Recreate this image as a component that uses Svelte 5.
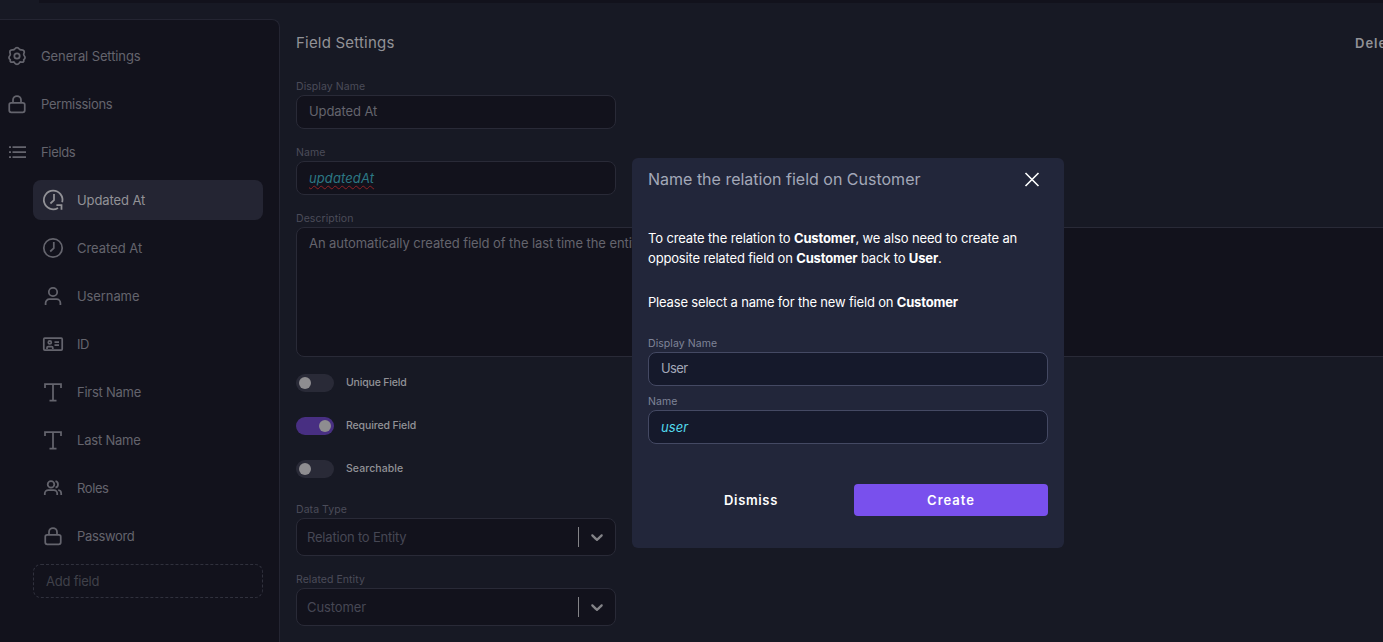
<script>
  const sections = [
    { icon: 'gear', label: 'General Settings', ls: -0.11 },
    { icon: 'lock', label: 'Permissions', ls: -0.3 },
    { icon: 'list', label: 'Fields', ls: -0.33 }
  ];
  const fields = [
    { icon: 'updated', label: 'Updated At', ls: -0.1, active: true },
    { icon: 'clock', label: 'Created At', ls: -0.03 },
    { icon: 'user', label: 'Username', ls: -0.1 },
    { icon: 'id', label: 'ID', ls: -0.4 },
    { icon: 'text', label: 'First Name', ls: -0.25 },
    { icon: 'text', label: 'Last Name', ls: -0.2 },
    { icon: 'users', label: 'Roles', ls: -0.4 },
    { icon: 'lock', label: 'Password', ls: -0.35 }
  ];
  const toggles = [
    { label: 'Unique Field', on: false, ls: -0.17 },
    { label: 'Required Field', on: true, ls: -0.12 },
    { label: 'Searchable', on: false, ls: 0.08 }
  ];
  const selects = [
    { label: 'Data Type', value: 'Relation to Entity', ls: -0.2 },
    { label: 'Related Entity', value: 'Customer', ls: -0.08 }
  ];
</script>

{#snippet icon(name)}
  <svg class="icon" viewBox="0 0 24 24" width="24" height="24" fill="none" stroke="currentColor" stroke-width="1.75">
    {#if name === 'gear'}
      <circle cx="12" cy="12" r="2.7" />
      <path d="M9.7 5.1Q10.6 3.7 12 3.7T14.3 5.1Q15 6.1 16.5 5.9Q18.3 5.7 19 7T18.8 9.7Q18.3 10.9 19.4 12Q20.4 13 19.9 14.3L19.4 15Q18.4 15.4 18.8 16.3Q19.1 17.6 18 18.1Q17 18.3 16 18Q14.9 17.9 14.3 18.9Q13.3 20.3 12 20.3T9.7 18.9Q9.1 17.9 8 18Q7 18.3 6 18.1Q4.9 17.6 5.2 16.3Q5.6 15.4 4.6 15L4.1 14.3Q3.6 13 4.6 12Q5.7 10.9 5.2 9.7T5 7Q5.7 5.7 7.5 5.9Q9 6.1 9.7 5.1Z" />
    {:else if name === 'lock'}
      <rect x="4.25" y="10.75" width="15.5" height="9.5" rx="2" />
      <path d="M8 10.5V8a4 4 0 0 1 8 0v2.5" />
    {:else if name === 'list'}
      <path d="M7.5 7H21M7.5 12H21M7.5 17H21M4 7h2M4 12h2M4 17h2" />
    {:else if name === 'updated'}
      <path d="M21.2 14.2A9.3 9.3 0 1 0 17 19.9M13 6v6.2l-3.6 3.3M15.4 17h5.1v4.8" />
    {:else if name === 'clock'}
      <circle cx="12" cy="12" r="9.2" />
      <path d="M12.8 6v6.2l-3.6 3.3" />
    {:else if name === 'user'}
      <circle cx="12" cy="8" r="4.2" />
      <path d="M4.6 21v-2a3.8 3.8 0 0 1 3.8-3.8h7.2a3.8 3.8 0 0 1 3.8 3.8v2" />
    {:else if name === 'id'}
      <rect x="2.8" y="6.2" width="18.4" height="11.8" rx="1" />
      <circle cx="8.8" cy="10.4" r="1.5" />
      <path d="M6 17v-1.2q0-1.2 1.2-1.2h3.4q1.2 0 1.2 1.2V17M13.5 10.2H18M13.5 13H18" />
    {:else if name === 'text'}
      <path d="M4 8V4.2h16V8M12 4.2v16.6M8.5 20.6h7" />
    {:else if name === 'users'}
      <circle cx="10" cy="8.4" r="3.3" />
      <path d="M3.8 19v-1.6a3.4 3.4 0 0 1 3.4-3.4h5.6a3.4 3.4 0 0 1 3.4 3.4V19M14.5 5.2a3.3 3.3 0 0 1 0 6.4M17.2 14a3.4 3.4 0 0 1 3 3.4V19" />
    {/if}
  </svg>
{/snippet}

<div class="page">
  <div class="topstrip"></div>
  <div class="body">
    <aside>
      {#each sections as s}
        <div class="section">{@render icon(s.icon)}<span style="letter-spacing:{s.ls}px">{s.label}</span></div>
      {/each}
      <div class="fields">
        {#each fields as f}
          <div class="field" class:active={f.active}>{@render icon(f.icon)}<span style="letter-spacing:{f.ls}px">{f.label}</span></div>
        {/each}
        <div class="add">Add field</div>
      </div>
    </aside>

    <main>
      <header><h1>Field Settings</h1><button class="delete">Delete</button></header>
      <div class="group">
        <div class="label">Display Name</div>
        <div class="input">Updated At</div>
      </div>
      <div class="group">
        <div class="label">Name</div>
        <div class="input code"><span class="misspelt">updatedAt</span></div>
      </div>
      <div class="group">
        <div class="label">Description</div>
        <div class="input area">An automatically created field of the last time the entity was updated</div>
      </div>
      <div class="toggles">
        {#each toggles as t}
          <div class="toggle"><i class:on={t.on}></i><span style="letter-spacing:{t.ls}px">{t.label}</span></div>
        {/each}
      </div>
      {#each selects as s}
        <div class="group">
          <div class="label">{s.label}</div>
          <div class="input select">
            <span style="letter-spacing:{s.ls}px">{s.value}</span>
            <b></b>
            <svg width="20" height="20" viewBox="0 0 20 20"><path d="M4.516 7.548c0.436-0.446 1.043-0.481 1.576 0l3.908 3.747 3.908-3.747c0.533-0.481 1.141-0.446 1.574 0 0.436 0.445 0.408 1.197 0 1.615-0.406 0.418-4.695 4.502-4.695 4.502-0.217 0.223-0.502 0.335-0.787 0.335s-0.57-0.112-0.789-0.335c0 0-4.287-4.084-4.695-4.502s-0.436-1.17 0-1.615z" fill="#848488" /></svg>
          </div>
        </div>
      {/each}
    </main>
  </div>

  <div class="modal" role="dialog" aria-label="Name the relation field">
    <div class="mhead">
      <h2>Name the relation field on Customer</h2>
      <svg width="16" height="16" viewBox="0 0 16 16" stroke="#fff" stroke-width="1.6"><path d="M1.5 2l13 13M14.5 2l-13 13" /></svg>
    </div>
    <p class="p1"><span class="l1">To create the relation to <strong>Customer</strong>, we also need to create an</span><br /><span class="l2">opposite related field on <strong>Customer</strong> back to <strong>User</strong>.</span></p>
    <p class="l3">Please select a name for the new field on <strong>Customer</strong></p>
    <div class="mgroup">
      <div class="label">Display Name</div>
      <div class="input name">User</div>
    </div>
    <div class="mgroup">
      <div class="label">Name</div>
      <div class="input code">user</div>
    </div>
    <div class="actions">
      <button class="dismiss">Dismiss</button>
      <button class="primary">Create</button>
    </div>
  </div>
</div>

<style>
  :global(body) { background: #171924; overflow: hidden; }
  .page {
    position: relative;
    width: 1383px;
    height: 642px;
    overflow: hidden;
    background: #171924;
    font-family: Inter, sans-serif;
    font-size: 13px;
    display: flex;
    flex-direction: column;
    white-space: nowrap;
  }
  .page :global(*) { box-sizing: border-box; }
  .topstrip { height: 3px; flex: none; margin-left: 39px; background: #12121c; }
  .body { flex: 1; display: flex; padding-top: 16px; }
  aside {
    width: 280px;
    flex: none;
    height: 640px;
    background: #12121c;
    border-top: 1px solid #242532;
    border-right: 1px solid #242532;
    border-top-right-radius: 8px;
    padding: 16px 16px 0 5px;
  }
  .icon { flex: none; display: block; }
  .section, .field { display: flex; align-items: center; height: 40px; margin-bottom: 8px; color: #64646d; }
  .section span, .field span { padding-bottom: 1px; }
  .section { gap: 12px; }
  .fields { padding-left: 28px; }
  .field { gap: 12px; padding-left: 8px; border-radius: 8px; }
  .field.active { background: #242533; color: #929297; }
  .add {
    height: 34px;
    border: 1px dashed #30313d;
    border-radius: 8px;
    display: flex;
    align-items: center;
    padding-left: 12px;
    letter-spacing: -0.22px;
    color: #40414a;
  }
  main { flex: 1; min-width: 0; padding-left: 16px; }
  header { height: 58px; display: flex; align-items: center; justify-content: space-between; padding-bottom: 11px; }
  h1 { margin: 0; font-size: 15px; font-weight: 400; letter-spacing: 0.2px; color: #929297; }
  .delete { width: 28px; overflow: visible; text-align: left; }
  button {
    border: 0;
    background: none;
    padding: 0;
    font: 600 13px Inter, sans-serif;
    letter-spacing: 1px;
    color: #fff;
    white-space: nowrap;
  }
  button.delete { color: #929297; }
  .group { margin-bottom: 14px; }
  .label { height: 18px; line-height: 18px; padding-top: 1px; font-size: 10.5px; letter-spacing: 0.06px; color: #4b4c59; }
  .input {
    width: 320px;
    height: 34px;
    border: 1px solid #292a37;
    border-radius: 8px;
    background: #12121c;
    padding-left: 12px;
    line-height: 31px;
    letter-spacing: -0.09px;
    color: #64646d;
  }
  .code { font-style: italic; line-height: 32px; letter-spacing: 0.1px; color: #2c7884; }
  .misspelt { text-decoration: underline wavy #8e2124 1px; text-underline-offset: 2px; text-decoration-skip-ink: none; }
  .area { width: 1120px; height: 130px; line-height: 20px; padding-top: 5px; letter-spacing: -0.07px; }
  .toggles { display: flex; flex-direction: column; gap: 25px; padding: 3px 0 22px; }
  .toggle { display: flex; align-items: center; gap: 12px; height: 18px; font-size: 10.5px; font-weight: 500; color: #929297; }
  .toggle span { padding-bottom: 1px; }
  .toggle i { width: 38px; height: 18px; border-radius: 9px; background: #292a37; padding: 3px; display: flex; }
  .toggle i::before { content: ''; width: 12px; height: 12px; border-radius: 50%; background: #8e8d90; }
  .toggle i.on { background: #482f82; justify-content: flex-end; }
  .select { height: 38px; display: flex; align-items: center; padding: 0 8px 0 10px; color: #464754; }
  .select span { flex: 1; }
  .select b { width: 1px; height: 20px; background: #848488; margin-right: 8px; }
  .modal {
    position: absolute;
    left: 632px;
    top: 158px;
    width: 432px;
    height: 390px;
    padding: 0 16px;
    border-radius: 6px;
    background: #22263a;
    color: #fff;
  }
  .mhead { height: 42px; display: flex; align-items: center; justify-content: space-between; padding-right: 8px; margin-bottom: 28px; }
  h2 { margin: 0; font-size: 16px; font-weight: 400; color: #a3a8b8; }
  p { margin: 0; line-height: 20px; }
  .p1 { margin-bottom: 24px; }
  .l1 { letter-spacing: -0.13px; }
  .l2 { letter-spacing: -0.16px; }
  .l3 { margin-bottom: 22px; letter-spacing: -0.18px; }
  strong { font-weight: 700; }
  .mgroup { margin-bottom: 6px; }
  .modal .label { color: #7f8498; }
  .modal .input { width: 400px; background: #15192b; border-color: #444963; color: #a3a8b8; }
  .modal .name { letter-spacing: -0.6px; }
  .modal .code { color: #53dbee; }
  .actions { display: flex; padding-top: 34px; }
  .actions button { flex: 1; height: 32px; }
  .actions .dismiss { letter-spacing: 0.65px; }
  .actions .primary { flex: none; width: 194px; background: #7950ed; border-radius: 4px; }
</style>
